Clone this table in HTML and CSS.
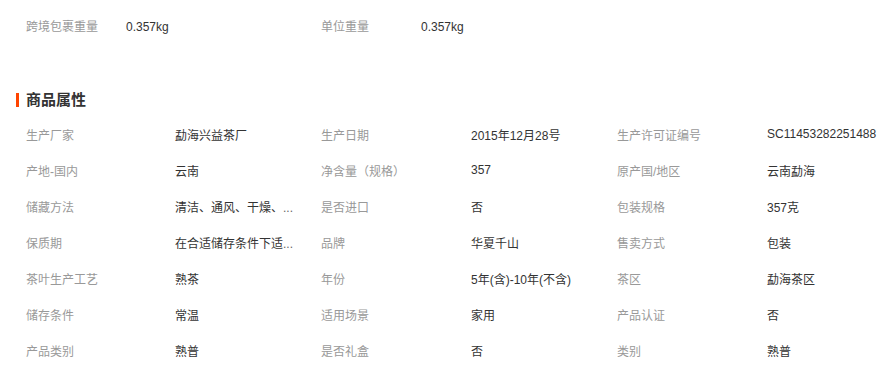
FILE: index.html
```html
<!DOCTYPE html>
<html lang="zh-CN">
<head>
<meta charset="utf-8">
<title>商品属性</title>
<link rel="stylesheet" href="styles.css">
</head>
<body>
<div class="basic">
  <span class="b-label">跨境包裹重量</span><span class="b-value">0.357kg</span>
  <span class="b-label">单位重量</span><span class="b-value">0.357kg</span>
</div>
<h2 class="title"><span class="bar"></span>商品属性</h2>
<div class="attrs">
  <span class="label">生产厂家</span><span class="value">勐海兴益茶厂</span>
  <span class="label">生产日期</span><span class="value">2015年12月28号</span>
  <span class="label">生产许可证编号</span><span class="value">SC11453282251488</span>

  <span class="label">产地-国内</span><span class="value">云南</span>
  <span class="label">净含量（规格）</span><span class="value">357</span>
  <span class="label">原产国/地区</span><span class="value">云南勐海</span>

  <span class="label">储藏方法</span><span class="value" title="清洁、通风、干燥、无异味">清洁、通风、干燥、<span class="dots">...</span></span>
  <span class="label">是否进口</span><span class="value">否</span>
  <span class="label">包装规格</span><span class="value">357克</span>

  <span class="label">保质期</span><span class="value" title="在合适储存条件下适宜长期保存">在合适储存条件下适<span class="dots">...</span></span>
  <span class="label">品牌</span><span class="value">华夏千山</span>
  <span class="label">售卖方式</span><span class="value">包装</span>

  <span class="label">茶叶生产工艺</span><span class="value">熟茶</span>
  <span class="label">年份</span><span class="value">5年(含)-10年(不含)</span>
  <span class="label">茶区</span><span class="value">勐海茶区</span>

  <span class="label">储存条件</span><span class="value">常温</span>
  <span class="label">适用场景</span><span class="value">家用</span>
  <span class="label">产品认证</span><span class="value">否</span>

  <span class="label">产品类别</span><span class="value">熟普</span>
  <span class="label">是否礼盒</span><span class="value">否</span>
  <span class="label">类别</span><span class="value">熟普</span>
</div>
</body>
</html>
```

FILE: styles.css
```css
html, body {
  margin: 0;
  padding: 0;
  background: #fff;
}
body {
  font-family: "Liberation Sans", "Noto Sans CJK SC", sans-serif;
  font-size: 12px;
  color: #333;
}
.basic {
  display: flex;
  padding: 17px 0 0 26px;
  line-height: 20px;
  height: 20px;
}
.b-label {
  width: 100px;
  color: #999;
}
.b-value {
  width: 195px;
  color: #333;
}
.title {
  display: flex;
  align-items: center;
  margin: 53px 0 0 16px;
  height: 20px;
  line-height: 20px;
  font-size: 15px;
  font-weight: bold;
  color: #333;
}
.bar {
  width: 3px;
  height: 14px;
  background: #ff4400;
  margin-right: 7px;
}
.attrs {
  display: grid;
  grid-template-columns: 149px 146px 150px 146px 150px 1fr;
  grid-auto-rows: 36px;
  align-items: center;
  padding-left: 26px;
  margin-top: 6px;
}
.label {
  color: #999;
  white-space: nowrap;
}
.value {
  color: #333;
  white-space: nowrap;
}
.dots {
  color: #666;
  letter-spacing: 0;
}
```
